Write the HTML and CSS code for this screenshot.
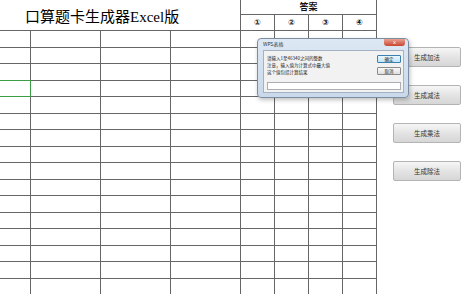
FILE: index.html
```html
<!DOCTYPE html>
<html lang="zh-CN">
  <head>
    <meta charset="UTF-8" />
    <title>口算题卡生成器Excel版</title>
    <link rel="stylesheet" href="styles.css">
  </head>
  <body>
    <div class="workbook">
      <div class="sheet">
        <div class="title">口算题卡生成器Excel版</div>
        <div class="answer-head">答案</div>
        <div class="num">①</div>
        <div class="num">②</div>
        <div class="num">③</div>
        <div class="num">④</div>
        <!-- data rows -->
        <div class="cell"></div><div class="cell"></div><div class="cell"></div><div class="cell"></div><div class="cell"></div><div class="cell"></div><div class="cell"></div><div class="cell"></div>
        <div class="cell"></div><div class="cell"></div><div class="cell"></div><div class="cell"></div><div class="cell"></div><div class="cell"></div><div class="cell"></div><div class="cell"></div>
        <div class="cell"></div><div class="cell"></div><div class="cell"></div><div class="cell"></div><div class="cell"></div><div class="cell"></div><div class="cell"></div><div class="cell"></div>
        <div class="cell selected"></div><div class="cell"></div><div class="cell"></div><div class="cell"></div><div class="cell"></div><div class="cell"></div><div class="cell"></div><div class="cell"></div>
        <div class="cell"></div><div class="cell"></div><div class="cell"></div><div class="cell"></div><div class="cell"></div><div class="cell"></div><div class="cell"></div><div class="cell"></div>
        <div class="cell"></div><div class="cell"></div><div class="cell"></div><div class="cell"></div><div class="cell"></div><div class="cell"></div><div class="cell"></div><div class="cell"></div>
        <div class="cell"></div><div class="cell"></div><div class="cell"></div><div class="cell"></div><div class="cell"></div><div class="cell"></div><div class="cell"></div><div class="cell"></div>
        <div class="cell"></div><div class="cell"></div><div class="cell"></div><div class="cell"></div><div class="cell"></div><div class="cell"></div><div class="cell"></div><div class="cell"></div>
        <div class="cell"></div><div class="cell"></div><div class="cell"></div><div class="cell"></div><div class="cell"></div><div class="cell"></div><div class="cell"></div><div class="cell"></div>
        <div class="cell"></div><div class="cell"></div><div class="cell"></div><div class="cell"></div><div class="cell"></div><div class="cell"></div><div class="cell"></div><div class="cell"></div>
        <div class="cell"></div><div class="cell"></div><div class="cell"></div><div class="cell"></div><div class="cell"></div><div class="cell"></div><div class="cell"></div><div class="cell"></div>
        <div class="cell"></div><div class="cell"></div><div class="cell"></div><div class="cell"></div><div class="cell"></div><div class="cell"></div><div class="cell"></div><div class="cell"></div>
        <div class="cell"></div><div class="cell"></div><div class="cell"></div><div class="cell"></div><div class="cell"></div><div class="cell"></div><div class="cell"></div><div class="cell"></div>
        <div class="cell"></div><div class="cell"></div><div class="cell"></div><div class="cell"></div><div class="cell"></div><div class="cell"></div><div class="cell"></div><div class="cell"></div>
        <div class="cell"></div><div class="cell"></div><div class="cell"></div><div class="cell"></div><div class="cell"></div><div class="cell"></div><div class="cell"></div><div class="cell"></div>
        <div class="cell"></div><div class="cell"></div><div class="cell"></div><div class="cell"></div><div class="cell"></div><div class="cell"></div><div class="cell"></div><div class="cell"></div>
      </div>

      <div class="actions">
        <button class="btn">生成加法</button>
        <button class="btn">生成减法</button>
        <button class="btn">生成乘法</button>
        <button class="btn">生成除法</button>
      </div>
    </div>

    <div class="dialog">
      <div class="dialog-head">
        <span>WPS表格</span>
        <span class="close">x</span>
      </div>
      <div class="dialog-body">
        <div class="dialog-row">
          <div class="prompt">
            请输入1至46340之间的整数<br />
            注意，输入值为计算式中最大值<br />
            这个值包括计算结果
          </div>
          <div class="dialog-btns">
            <span class="dbtn default">确定</span>
            <span class="dbtn">取消</span>
          </div>
        </div>
        <div class="dialog-input"></div>
      </div>
    </div>
  </body>
</html>
```

FILE: styles.css
```css
body {
  margin: 0;
  background: #fff;
  font-family: "Liberation Serif", "Noto Sans CJK SC", serif;
  color: #111;
  overflow: hidden;
  height: 295px;
}

.workbook {
  display: flex;
  align-items: flex-start;
}

/* spreadsheet: cells are white, the gaps show as grid lines */
.sheet {
  display: grid;
  grid-template-columns: 30px 69px 69px 69px 33px 33px 33px 33px;
  grid-template-rows: 14px 15px;
  grid-auto-rows: 15.5px;
  gap: 1px;
  padding-right: 1px;
  background: #666;
  width: 376px;
}

.sheet > div {
  background: #fff;
}

.title {
  grid-column: 1 / 5;
  grid-row: 1 / 3;
  display: flex;
  align-items: center;
  padding-left: 25px;
  padding-top: 1px;
  font-size: 15px;
  font-weight: 400;
  color: #000;
}

.answer-head {
  grid-column: 5 / 9;
  text-align: center;
  font-family: "Noto Sans CJK SC", sans-serif;
  font-size: 9px;
  font-weight: 700;
  line-height: 14px;
}

.num {
  text-align: center;
  font-family: "DejaVu Sans", "Noto Sans CJK SC", sans-serif;
  font-size: 8px;
  font-weight: 700;
  line-height: 15px;
}

.cell.selected {
  outline: 1px solid #3b9d45;
  position: relative;
  z-index: 1;
}

.actions {
  display: flex;
  flex-direction: column;
  gap: 18px;
  padding: 47px 0 0 16px;
}

.btn {
  width: 68px;
  height: 20px;
  padding: 0;
  border: 1px solid #b4b4b4;
  border-radius: 2px;
  background: linear-gradient(#f6f6f6, #e4e4e4 50%, #d6d6d6);
  font-family: "Noto Sans CJK SC", sans-serif;
  font-size: 6.5px;
  color: #333;
}

/* WPS input box, floating over the sheet */
.dialog {
  position: absolute;
  left: 257px;
  top: 38px;
  width: 152px;
  height: 60px;
  box-sizing: border-box;
  padding: 0 4px 4px 5px;
  border: 1px solid #7d8ea3;
  border-radius: 4px;
  background: linear-gradient(#dde8f4, #c9d8ea);
  box-shadow: 1px 2px 4px rgba(0, 0, 0, 0.25);
  font-family: "Noto Sans CJK SC", sans-serif;
  z-index: 5;
}

.dialog-head {
  height: 11px;
  display: flex;
  justify-content: space-between;
  align-items: flex-start;
  font-size: 5px;
  line-height: 10px;
  color: #2c3440;
}

.close {
  width: 21px;
  height: 7px;
  margin-right: -1px;
  border-radius: 0 0 3px 3px;
  background: linear-gradient(#e9a294, #c9452e);
  color: #fff;
  font-family: "DejaVu Sans", sans-serif;
  font-size: 5px;
  line-height: 7px;
  text-align: center;
}

.dialog-body {
  height: 43px;
  box-sizing: border-box;
  border: 1px solid #a3b1c2;
  background: #f2f2f2;
  padding: 4px 2px 2px 3px;
  display: flex;
  flex-direction: column;
}

.dialog-row {
  display: flex;
  justify-content: space-between;
}

.prompt {
  font-size: 4.5px;
  line-height: 7px;
  color: #222;
}

.dialog-btns {
  display: flex;
  flex-direction: column;
  gap: 4px;
}

.dbtn {
  width: 22px;
  height: 6px;
  border: 1px solid #8a8a8a;
  border-radius: 1px;
  background: linear-gradient(#fafafa, #dedede);
  font-size: 4.5px;
  line-height: 6px;
  text-align: center;
  color: #222;
}

.dbtn.default {
  border-color: #3c7fb1;
  background: linear-gradient(#eaf6fd, #bee6fd);
}

.dialog-input {
  margin-top: auto;
  height: 6px;
  border: 1px solid #abadb3;
  background: #fff;
}
```
